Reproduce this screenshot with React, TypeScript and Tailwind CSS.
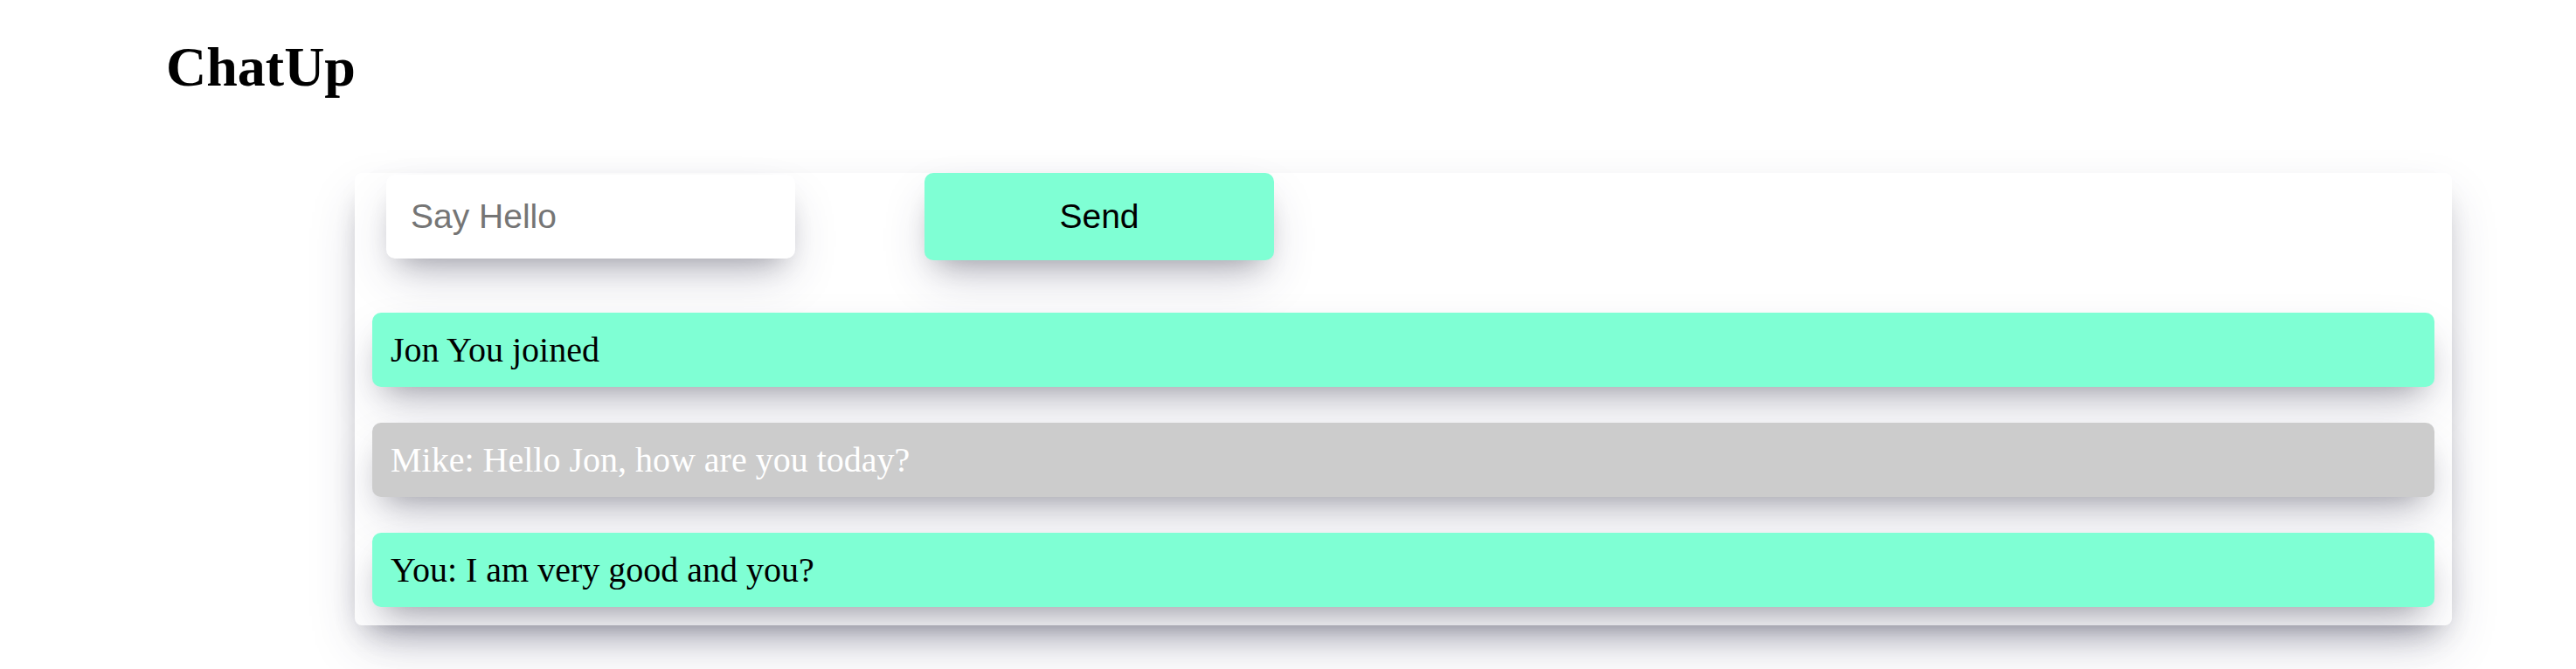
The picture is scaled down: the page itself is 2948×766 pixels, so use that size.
import React from "react";

const shadow =
  "shadow-[0_26px_54px_-10px_rgba(50,50,93,0.25),0_16px_32px_-16px_rgba(0,0,0,0.3)]";

export default function App() {
  const messages = [
    { text: "Jon You joined", mine: true },
    { text: "Mike: Hello Jon, how are you today?", mine: false },
    { text: "You: I am very good and you?", mine: true },
  ];
  return (
    <div className="min-h-screen bg-white font-['Liberation_Serif',serif]">
      <h1 className="pl-[190px] pt-[45px] text-[64px] leading-none font-bold text-black">
        ChatUp
      </h1>
      <div
        className={`ml-[406px] mt-[89px] w-[2400px] rounded-[8px] bg-white ${shadow}`}
      >
        <div className="flex h-[100px] items-center">
          <input
            placeholder="Say Hello"
            className={`ml-[36px] h-[96px] w-[468px] rounded-[10px] bg-white pl-[28px] font-['Liberation_Sans',Arial,sans-serif] text-[39px] text-black outline-none placeholder:text-[#757575] ${shadow}`}
          />
          <button
            className={`ml-[148px] h-[100px] w-[400px] rounded-[10px] bg-[#7fffd4] font-['Liberation_Sans',Arial,sans-serif] text-[39px] text-black ${shadow}`}
          >
            Send
          </button>
        </div>
        <div className="flex flex-col gap-[41px] px-[20px] pt-[60px] pb-[21px]">
          {messages.map((m, i) => (
            <div
              key={i}
              className={`flex h-[85px] items-center rounded-[10px] pl-[21px] text-[40px] ${
                m.mine ? "bg-[#7fffd4] text-black" : "bg-[#cccccc] text-white"
              } ${shadow}`}
            >
              {m.text}
            </div>
          ))}
        </div>
      </div>
    </div>
  );
}
